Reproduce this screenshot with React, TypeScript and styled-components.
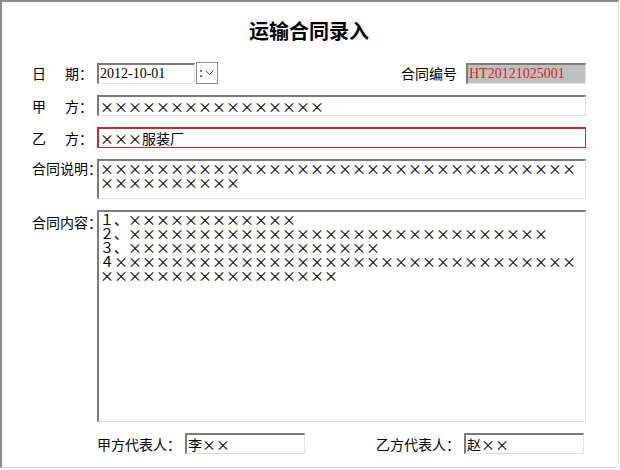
import React, { useState } from "react";
import styled, { createGlobalStyle } from "styled-components";

const GlobalStyle = createGlobalStyle`
  html, body {
    margin: 0;
    padding: 0;
    background: #fff;
  }
  body {
    font-family: "Noto Sans CJK SC", sans-serif;
    color: #000;
  }
`;

const Frame = styled.div`
  box-sizing: border-box;
  width: 619px;
  height: 468px;
  border-top: 2px solid #8c8c8c;
  border-left: 2px solid #8c8c8c;
  border-right: 1px solid #e0e0e0;
  border-bottom: 1px solid #e0e0e0;
  padding: 19px 32px 0 30px;
  display: flex;
  flex-direction: column;
`;

const Title = styled.h1`
  margin: 0;
  font-family: "Noto Sans CJK SC", sans-serif;
  font-size: 20px;
  line-height: 20px;
  font-weight: 700;
  text-align: center;
`;

const Form = styled.div`
  margin-top: 21px;
  display: flex;
  flex-direction: column;
  gap: 11px;
`;

const Row = styled.div<{ $top?: boolean; $indent?: number }>`
  display: flex;
  align-items: ${(p) => (p.$top ? "flex-start" : "center")};
  padding-left: ${(p) => p.$indent || 0}px;
  padding-right: ${(p) => (p.$indent ? 2 : 0)}px;
  justify-content: ${(p) => (p.$indent ? "space-between" : "flex-start")};
`;

const Label = styled.label<{ $top?: number }>`
  flex: 0 0 65px;
  width: 65px;
  padding-top: ${(p) => p.$top || 0}px;
  font-size: 14px;
  line-height: 14px;
  white-space: nowrap;
`;

const Spread = styled.span`
  display: inline-block;
  width: 33px;
`;

const SideLabel = styled.span<{ $gap: number }>`
  font-size: 14px;
  line-height: 14px;
  white-space: nowrap;
  margin-right: ${(p) => p.$gap}px;
`;

const Group = styled.div`
  display: flex;
  align-items: center;
`;

const Spacer = styled.div`
  flex: 1;
`;

const Field = styled.input<{
  $w?: number;
  $bg?: string;
  $color?: string;
  $alert?: boolean;
  $latin?: boolean;
}>`
  box-sizing: border-box;
  width: ${(p) => (p.$w ? `${p.$w}px` : "auto")};
  flex: ${(p) => (p.$w ? "0 0 auto" : "1")};
  min-width: 0;
  height: 21px;
  margin: 0;
  padding: 0 1px;
  outline: none;
  background: ${(p) => p.$bg || "#fff"};
  color: ${(p) => p.$color || "#000"};
  font-family: ${(p) =>
    p.$latin
      ? `"Liberation Serif", "Noto Sans CJK SC", serif`
      : `"Noto Sans CJK SC", sans-serif`};
  font-feature-settings: ${(p) => (p.$latin ? "normal" : `"fwid" 1`)};
  font-size: 14px;
  line-height: 17px;
  border-style: solid;
  border-color: ${(p) =>
    p.$alert
      ? "#b83232"
      : "#7b7b7b #e2e2e2 #e2e2e2 #7b7b7b"};
  border-width: ${(p) => (p.$alert ? "2px 1px 1px 2px" : "2px 1px 1px 2px")};
`;

const Area = styled.textarea<{ $h: number }>`
  box-sizing: border-box;
  flex: 1;
  height: ${(p) => p.$h}px;
  margin: 0;
  padding: 0 0 0 1px;
  outline: none;
  resize: none;
  overflow: hidden;
  background: #fff;
  font-family: "Noto Sans CJK SC", sans-serif;
  font-feature-settings: "fwid" 1;
  font-size: 14px;
  line-height: 14px;
  border-style: solid;
  border-color: #7b7b7b #e2e2e2 #e2e2e2 #7b7b7b;
  border-width: 2px 1px 1px 2px;
`;

const Dropdown = styled.div`
  box-sizing: border-box;
  width: 22px;
  height: 22px;
  margin-left: 1px;
  border: 1px solid #8a8a8a;
  background: #fff;
  display: flex;
  align-items: center;
  gap: 2px;
  padding-left: 2px;
  font-family: "Liberation Serif", serif;
  font-size: 14px;
  line-height: 14px;
`;

const X = (n: number) => "×".repeat(n);

export default function App() {
  const [form, setForm] = useState({
    date: "2012-10-01",
    code: "HT20121025001",
    partyA: X(16),
    partyB: "×××服装厂",
    note: X(44),
    body:
      "1、" + X(12) + "\n2、" + X(30) + "\n3、" + X(18) + "\n4" + X(50),
    repA: "李××",
    repB: "赵××",
  });

  const onFieldChange = (
    name: keyof typeof form,
    e: React.ChangeEvent<HTMLInputElement | HTMLTextAreaElement>
  ) => {
    setForm({ ...form, [name]: e.target.value });
  };

  return (
    <Frame>
      <GlobalStyle />
      <Title>运输合同录入</Title>
      <Form>
        <Row>
          <Label>
            <Spread>日</Spread>期：
          </Label>
          <Field
            $w={98}
            $latin
            value={form.date}
            onChange={(e) => onFieldChange("date", e)}
          />
          <Dropdown>
            :
            <svg width="9" height="6" viewBox="0 0 9 6">
              <polyline
                points="0.5,0.5 4.5,4.5 8.5,0.5"
                fill="none"
                stroke="#555"
                strokeWidth="1"
              />
            </svg>
          </Dropdown>
          <Spacer />
          <SideLabel $gap={9}>合同编号</SideLabel>
          <Field
            $w={120}
            $latin
            $bg="#c0c0c0"
            $color="#d42020"
            value={form.code}
            readOnly
          />
        </Row>
        <Row>
          <Label>
            <Spread>甲</Spread>方：
          </Label>
          <Field
            value={form.partyA}
            onChange={(e) => onFieldChange("partyA", e)}
          />
        </Row>
        <Row>
          <Label>
            <Spread>乙</Spread>方：
          </Label>
          <Field
            $alert
            value={form.partyB}
            onChange={(e) => onFieldChange("partyB", e)}
          />
        </Row>
        <Row $top>
          <Label $top={2}>合同说明：</Label>
          <Area
            $h={40}
            value={form.note}
            onChange={(e) => onFieldChange("note", e)}
          />
        </Row>
        <Row $top>
          <Label $top={5}>合同内容：</Label>
          <Area
            $h={212}
            value={form.body}
            onChange={(e) => onFieldChange("body", e)}
          />
        </Row>
        <Row $indent={65}>
          <Group>
            <SideLabel $gap={4}>甲方代表人：</SideLabel>
            <Field
              $w={120}
              value={form.repA}
              onChange={(e) => onFieldChange("repA", e)}
            />
          </Group>
          <Group>
            <SideLabel $gap={4}>乙方代表人：</SideLabel>
            <Field
              $w={120}
              value={form.repB}
              onChange={(e) => onFieldChange("repB", e)}
            />
          </Group>
        </Row>
      </Form>
    </Frame>
  );
}
